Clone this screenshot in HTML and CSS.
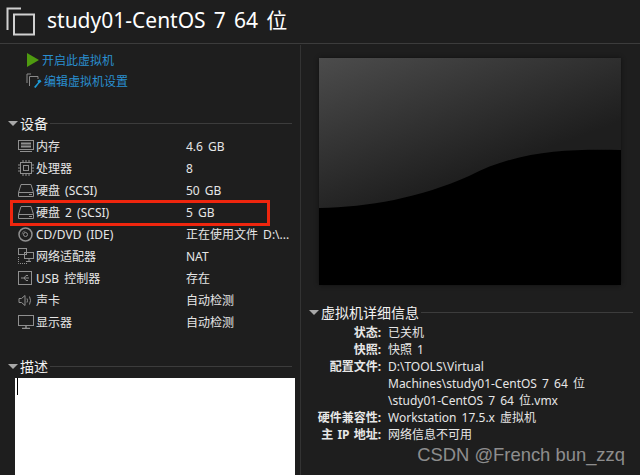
FILE: index.html
```html
<!DOCTYPE html>
<html lang="zh-CN">

<head>
    <meta charset="UTF-8">
    <title>study01-CentOS 7 64 位</title>
    <link rel="stylesheet" href="styles.css">
</head>

<body>
    <header class="titel">
        <svg class="titel-ikon" width="30" height="30" viewBox="0 0 30 30" fill="none" stroke="#d0d0d0" stroke-width="2">
            <path d="M1.500 23V1.500H15"/>
            <rect x="8" y="7.500" width="20" height="20"/>
        </svg>
        <h1>study01-CentOS 7 64 位</h1>
    </header>

    <main class="indhold">
        <section class="venstre">
            <ul class="handlinger">
                <li>
                    <svg width="14" height="14" viewBox="0 0 14 14"><path d="M1 0L13 7L1 14Z" fill="#4f9a10"/></svg>
                    <a href="#">开启此虚拟机</a>
                </li>
                <li>
                    <svg width="16" height="15" viewBox="0 0 16 15" fill="none">
                        <path d="M5 1H1V10" stroke="#8a8a8a"/>
                        <path d="M3.500 13V3.500H12V6" stroke="#8a8a8a"/>
                        <path d="M8 14L12 9.500L11.500 7.500L14 6.500L15.500 8.500L13 10.500L9.500 15Z" fill="#1e9ad6"/>
                    </svg>
                    <a href="#">编辑虚拟机设置</a>
                </li>
            </ul>

            <h2 class="overskrift enheder-titel"><span class="pil"></span>设备<span class="streg"></span></h2>
            <ul class="enheder">
                <li>
                    <svg width="16" height="12" viewBox="0 0 16 12" fill="none" stroke="#8f8f8f"><rect x=".5" y=".5" width="15" height="9"/><path d="M3 3.500H13M3 6.500H13" stroke-width="2"/><path d="M2 11.500H14"/></svg>
                    <span class="navn">内存</span><span class="vaerdi">4.6 GB</span>
                </li>
                <li>
                    <svg width="16" height="16" viewBox="0 0 16 16" fill="none" stroke="#8f8f8f"><rect x="2.500" y="2.500" width="11" height="11"/><rect x="5.500" y="5.500" width="5" height="5"/><path d="M5 0V2M8 0V2M11 0V2M5 14V16M8 14V16M11 14V16M0 5H2M0 8H2M0 11H2M14 5H16M14 8H16M14 11H16"/></svg>
                    <span class="navn">处理器</span><span class="vaerdi">8</span>
                </li>
                <li>
                    <svg width="16" height="13" viewBox="0 0 16 13" fill="none" stroke="#8f8f8f"><path d="M.5 8.500L3 .5H13L15.500 8.500V12.500H.5Z"/><path d="M.5 8.500H15.500"/><path d="M11 10.500H14"/></svg>
                    <span class="navn">硬盘 (SCSI)</span><span class="vaerdi">50 GB</span>
                </li>
                <li>
                    <svg width="16" height="13" viewBox="0 0 16 13" fill="none" stroke="#8f8f8f"><path d="M.5 8.500L3 .5H13L15.500 8.500V12.500H.5Z"/><path d="M.5 8.500H15.500"/><path d="M11 10.500H14"/></svg>
                    <span class="navn">硬盘 2 (SCSI)</span><span class="vaerdi">5 GB</span>
                </li>
                <li>
                    <svg width="15" height="15" viewBox="0 0 15 15" fill="none" stroke="#8f8f8f"><circle cx="7.500" cy="7.500" r="6.500" stroke-width="1.500"/><circle cx="7.500" cy="7.500" r="2"/><path d="M4 7.500A3.500 3.500 0 0 1 7.500 4" stroke="#5c5c5c"/></svg>
                    <span class="navn">CD/DVD (IDE)</span><span class="vaerdi">正在使用文件 D:\...</span>
                </li>
                <li>
                    <svg width="16" height="16" viewBox="0 0 16 16" fill="none" stroke="#8f8f8f"><rect x=".5" y=".5" width="8" height="6"/><rect x="6.500" y="4.500" width="9" height="6"/><path d="M11 11V13M8 13.500H13"/><path d="M.5 9V15.500H9" stroke-dasharray="1 1"/></svg>
                    <span class="navn">网络适配器</span><span class="vaerdi">NAT</span>
                </li>
                <li>
                    <svg width="14" height="14" viewBox="0 0 14 14" fill="none" stroke="#8f8f8f"><rect x=".5" y=".5" width="13" height="13"/><path d="M3 7H11M6 7L8 4.500H10M6 7L8 9.500H10"/></svg>
                    <span class="navn">USB 控制器</span><span class="vaerdi">存在</span>
                </li>
                <li>
                    <svg width="14" height="13" viewBox="0 0 14 13" fill="none" stroke="#8f8f8f"><path d="M1 4.500V8.500H3.500L7 11.500V1.500L3.500 4.500Z"/><path d="M9 4.500Q10 6.500 9 8.500M11.500 2.500Q13.500 6.500 11.500 10.500"/></svg>
                    <span class="navn">声卡</span><span class="vaerdi">自动检测</span>
                </li>
                <li>
                    <svg width="16" height="14" viewBox="0 0 16 14" fill="none" stroke="#8f8f8f"><rect x=".5" y=".5" width="15" height="10"/><path d="M8 11V13M4 13.500H12" stroke-width="1.500"/></svg>
                    <span class="navn">显示器</span><span class="vaerdi">自动检测</span>
                </li>
            </ul>

            <h2 class="overskrift beskrivelse-titel"><span class="pil"></span>描述<span class="streg"></span></h2>
            <div class="beskrivelse"><span class="markor"></span></div>

            <div class="markering"></div>
        </section>

        <section class="hoejre">
            <svg class="eksempel" width="302" height="227" viewBox="0 0 302 227">
                <defs>
                    <linearGradient id="glans" x1="0" y1="0" x2="0.75" y2="1">
                        <stop offset="0" stop-color="#4c4c4c"/>
                        <stop offset="0.75" stop-color="#1e1e1e"/>
                    </linearGradient>
                </defs>
                <rect width="302" height="227" fill="#000"/>
                <path d="M0 0H302V92C250 91 200 92 150 118C100 140 50 149 0 150Z" fill="url(#glans)"/>
            </svg>

            <h2 class="overskrift detalje-titel"><span class="pil"></span>虚拟机详细信息<span class="streg"></span></h2>
            <dl class="detaljer">
                <dt>状态:</dt><dd>已关机</dd>
                <dt>快照:</dt><dd>快照 1</dd>
                <dt>配置文件:</dt><dd>D:\TOOLS\Virtual<br>Machines\study01-CentOS 7 64 位<br>\study01-CentOS 7 64 位.vmx</dd>
                <dt>硬件兼容性:</dt><dd>Workstation 17.5.x 虚拟机</dd>
                <dt>主 IP 地址:</dt><dd>网络信息不可用</dd>
            </dl>
        </section>
    </main>

    <div class="vandmaerke">CSDN @French bun_zzq</div>
</body>

</html>
```

FILE: styles.css
```css
* {
    box-sizing: border-box;
}

body {
    width: 640px;
    height: 475px;
    margin: 0;
    overflow: hidden;
    position: relative;
    background: #1e1e1e;
    color: #e6e6e6;
    font-family: "Noto Sans", "Noto Sans CJK SC", sans-serif;
    font-size: 12px;
    word-spacing: 2px;
}

ul {
    margin: 0;
    padding: 0;
    list-style: none;
}

svg {
    display: block;
    flex: none;
}

.titel {
    height: 44px;
    display: flex;
    align-items: center;
    padding-left: 6px;
    border-bottom: 1px solid #3c3c3c;
}

h1 {
    margin: 0 0 5px 11px;
    font-size: 21px;
    font-weight: 400;
    word-spacing: 2.7px;
    color: #fff;
}

.indhold {
    display: flex;
    height: 431px;
}

.venstre {
    width: 301px;
    padding-top: 4px;
    border-right: 1px solid #333;
    margin-top: 1px;
}

.handlinger {
    padding-left: 26px;
}

.handlinger li {
    height: 21px;
    display: flex;
    align-items: center;
    gap: 2px;
}

.handlinger a {
    color: #2a8fd0;
    text-decoration: none;
}

.overskrift {
    margin: 0;
    display: flex;
    align-items: center;
    font-size: 14px;
    font-weight: 400;
    color: #f2f2f2;
    height: 20px;
}

.pil {
    width: 0;
    height: 0;
    margin-right: 2px;
    border-style: solid;
    border-width: 5px 5px 0;
    border-color: #a8a8a8 transparent transparent;
}

.streg {
    flex: 1;
    height: 1px;
    margin-left: 2px;
    background: #3c3c3c;
}

.enheder-titel {
    margin: 22px 8px 0 8px;
}

.enheder {
    margin-top: 2px;
    padding-left: 18px;
}

.enheder li {
    height: 22px;
    display: flex;
    align-items: center;
    position: relative;
}

.enheder svg {
    margin-right: 2px;
}

.navn {
    position: absolute;
    left: 18px;
}

.vaerdi {
    position: absolute;
    left: 168px;
}

.beskrivelse-titel {
    margin: 23px 8px 0 8px;
}

.beskrivelse {
    width: 280px;
    height: 97px;
    margin: 2px 0 0 15px;
    background: #fff;
    padding-left: 2px;
}

.markor {
    display: block;
    width: 1px;
    height: 17px;
    background: #000;
}

.markering {
    position: absolute;
    left: 10px;
    top: 200px;
    width: 260px;
    height: 26px;
    border: 3px solid #f0260e;
}

.hoejre {
    flex: 1;
    padding-top: 14px;
}

.eksempel {
    margin-left: 18px;
    box-shadow: 0 0 4px #111;
}

.detalje-titel {
    margin: 17px 7px 0 8px;
}

.detaljer {
    margin: 2px 0 0;
    display: grid;
    grid-template-columns: 80px 1fr;
    column-gap: 6px;
    line-height: 17px;
}

.detaljer dt {
    text-align: right;
    font-weight: 700;
    word-spacing: 1px;
}

.detaljer dd {
    margin: 0;
    padding-left: 1px;
}

.vandmaerke {
    position: absolute;
    right: 15px;
    bottom: 9px;
    font-family: "Liberation Sans", sans-serif;
    font-size: 18.4px;
    word-spacing: 0;
    color: rgba(255, 255, 255, 0.5);
}
```
